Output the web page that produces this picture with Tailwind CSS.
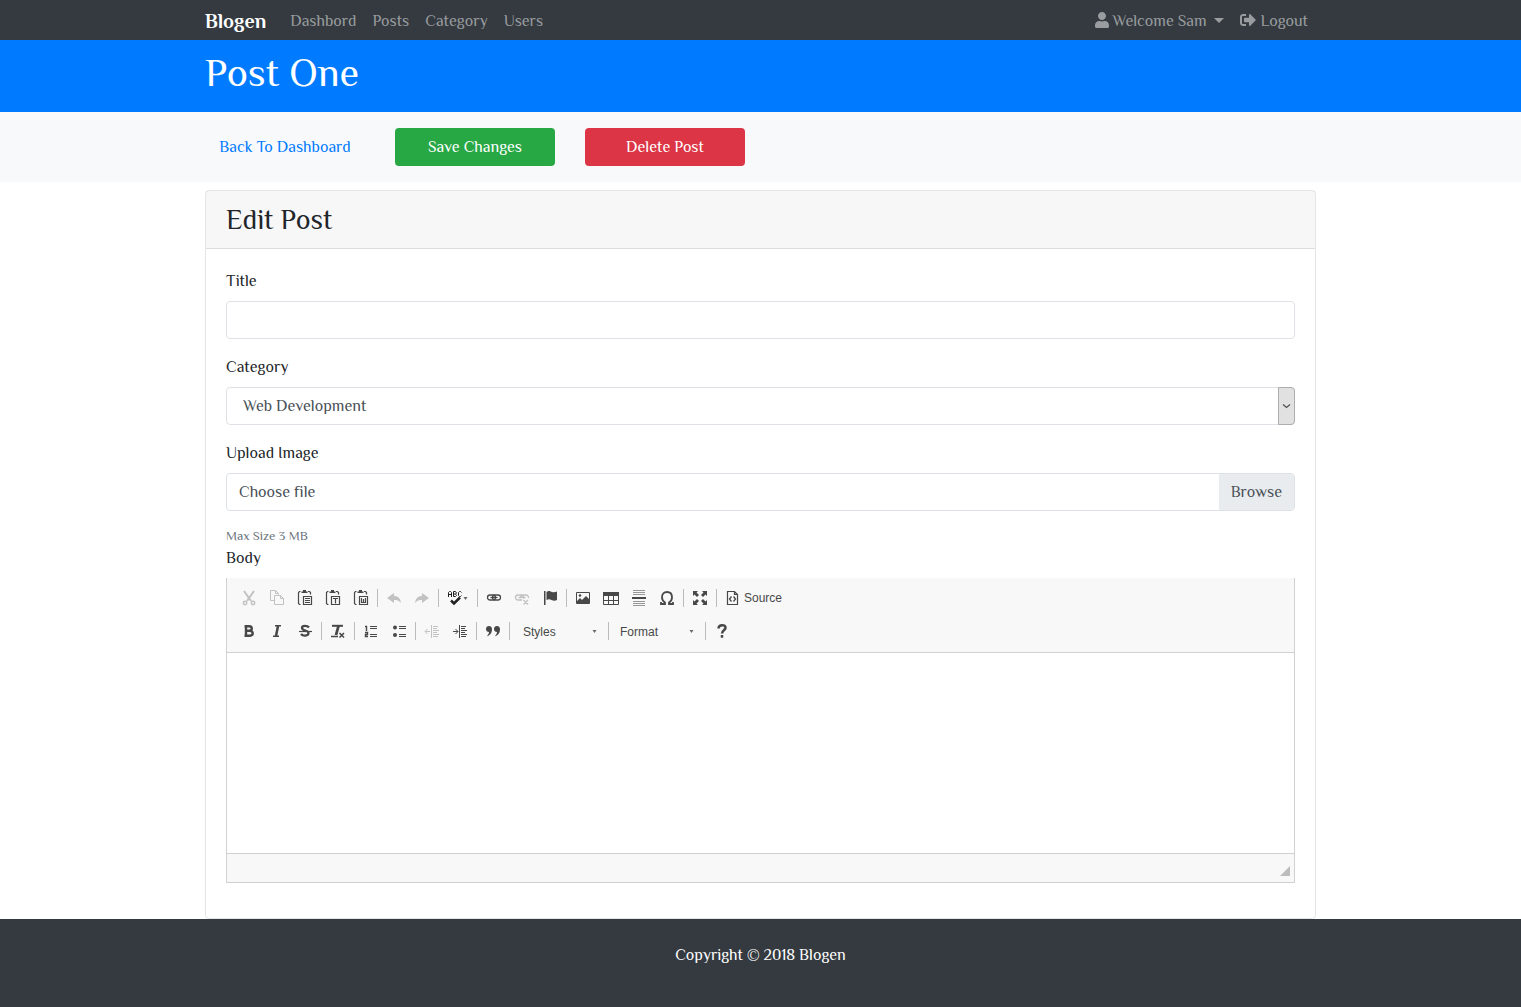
<!DOCTYPE html>
<html lang="en">
<head>
<meta charset="UTF-8">
<meta name="viewport" content="width=device-width, initial-scale=1">
<title>Blogen | Post One</title>
<script src="https://cdn.jsdelivr.net/npm/@tailwindcss/browser@4"></script>
</head>
<body class="flex min-h-screen flex-col bg-white font-['Philosopher','Lato',sans-serif] text-base text-[#212529]">

<nav class="bg-[#343a40]">
  <div class="mx-auto flex h-10 max-w-[1111px] items-center pt-[2px]">
    <a href="#" class="mr-4 text-[20px] leading-6 font-bold text-white">Blogen</a>
    <ul class="flex text-white/50">
      <li><a href="#" class="px-2">Dashbord</a></li>
      <li><a href="#" class="px-2">Posts</a></li>
      <li><a href="#" class="px-2">Category</a></li>
      <li><a href="#" class="px-2">Users</a></li>
    </ul>
    <ul class="ml-auto flex text-white/50">
      <li><a href="#" class="flex items-center gap-1 px-2">
        <svg class="mb-[2px] h-4 w-[14px]" viewBox="0 0 448 512" fill="currentColor" aria-hidden="true"><path d="M224 256c70.700 0 128-57.300 128-128S294.700 0 224 0 96 57.300 96 128s57.300 128 128 128zm89.600 32h-16.700c-22.200 10.200-46.900 16-72.900 16s-50.600-5.800-72.900-16h-16.700C60.200 288 0 348.200 0 422.400V464c0 26.500 21.500 48 48 48h352c26.500 0 48-21.500 48-48v-41.600c0-74.200-60.200-134.400-134.400-134.400z"/></svg>
        Welcome Sam
        <span class="mb-[2px] ml-1 border-x-[5px] border-t-[5px] border-x-transparent border-t-current"></span></a></li>
      <li><a href="#" class="flex items-center gap-1 px-2">
        <svg class="mb-[2px] size-4" viewBox="0 0 512 512" fill="currentColor" aria-hidden="true"><path d="M497 273L329 441c-15 15-41 4.500-41-17v-96H152c-13.300 0-24-10.700-24-24v-96c0-13.300 10.700-24 24-24h136V88c0-21.400 25.900-32 41-17l168 168c9.300 9.400 9.300 24.600 0 34zM192 436v-40c0-6.600-5.400-12-12-12H96c-17.700 0-32-14.300-32-32V160c0-17.700 14.300-32 32-32h84c6.600 0 12-5.400 12-12V76c0-6.600-5.400-12-12-12H96c-53 0-96 43-96 96v192c0 53 43 96 96 96h84c6.600 0 12-5.400 12-12z"/></svg>
        Logout</a></li>
    </ul>
  </div>
</nav>

<header class="bg-[#007bff] pt-[9px] pb-[15px] text-white">
  <h1 class="mx-auto max-w-[1111px] text-[40px] leading-12">Post One</h1>
</header>

<section class="bg-[#f8f9fa] py-4">
  <div class="mx-auto flex max-w-[1111px] gap-[30px]">
    <a href="#" class="w-40 py-[7px] text-center text-[#007bff]">Back To Dashboard</a>
    <button type="button" class="w-40 rounded bg-[#28a745] py-[7px] text-center text-white">Save Changes</button>
    <button type="button" class="w-40 rounded bg-[#dc3545] py-[7px] text-center text-white">Delete Post</button>
  </div>
</section>

<main class="pt-2">
  <div class="mx-auto max-w-[1111px] rounded border border-black/10">
    <div class="border-b border-black/10 bg-black/3 px-5 py-3">
      <h2 class="text-[28px] leading-[33px]">Edit Post</h2>
    </div>
    <form class="px-5 pt-5 pb-[19px]">
      <div class="mb-4">
        <label for="title" class="mb-2 block">Title</label>
        <input id="title" type="text" class="block h-[38px] w-full rounded border border-[#dee2e6] bg-white px-3 text-[#495057]">
      </div>
      <div class="mb-4">
        <label for="category" class="mb-2 block">Category</label>
        <div class="relative">
          <select id="category" class="block h-[38px] w-full appearance-none rounded border border-[#dee2e6] bg-white px-4 text-[#495057]">
            <option>Web Development</option>
          </select>
          <span class="pointer-events-none absolute inset-y-0 right-0 flex w-[17px] items-center justify-center rounded-r border border-[#adadad] bg-[#e1e1e1]">
            <svg class="size-[9px]" viewBox="0 0 9 9" fill="none" stroke="#505050" stroke-width="1.200" aria-hidden="true"><path d="M1 2.500l3.500 3L8 2.500"/></svg>
          </span>
        </div>
      </div>
      <div>
        <label for="image" class="mb-2 block">Upload Image</label>
        <label class="relative mb-4 flex h-[38px] items-center overflow-hidden rounded border border-[#dee2e6] text-[#495057]">
          <input id="image" type="file" class="sr-only">
          <span class="flex-1 px-3">Choose file</span>
          <span class="flex h-full items-center bg-[#e9ecef] px-3">Browse</span>
        </label>
        <small class="mb-[2px] block text-[13px] leading-[17px] text-[#6c757d]">Max Size 3 MB</small>
      </div>
      <div class="mb-4">
        <label for="body" class="mb-2 block">Body</label>
        <div class="border-x border-b border-[#d1d1d1]">
          <div class="flex h-[75px] flex-col gap-[5px] border-b border-[#d1d1d1] bg-[#f8f8f8] px-2 pt-[6px] font-['Liberation_Sans',Arial,sans-serif] text-xs text-[#484848]">
            <div class="flex h-7 items-center">
              <button type="button" aria-label="Cut" class="p-[6px] opacity-30"><svg class="size-4" viewBox="0 0 16 16" fill="none" stroke="currentColor" stroke-width="2"><path d="M3 1l7 10M13 1L6 11"/><circle cx="4" cy="13" r="1.700" stroke-width="1.500"/><circle cx="12" cy="13" r="1.700" stroke-width="1.500"/></svg></button>
              <button type="button" aria-label="Copy" class="p-[6px] opacity-30"><svg class="size-4" viewBox="0 0 16 16" fill="none" stroke="currentColor"><path d="M5.500 10.500h-4V.500h5l3 3v1M6.500.500v3h3M5.500 5.500h6l3 3v6h-9zM11.500 5.500v3h3"/></svg></button>
              <button type="button" aria-label="Paste" class="p-[6px]"><svg class="size-4" viewBox="0 0 16 16" fill="none" stroke="currentColor" stroke-width="1.200"><path d="M3.500 1.500h-1l-1 1v11l1 1h1M11 1.500h1.500l1 1v2M6.500 6.500h8v8h-8zM8 8.500h5M8 10.500h5M8 12.500h5"/><path d="M4.500 3V1.500h1.500V0h3v1.500h1.500V3z" fill="currentColor" stroke="none"/></svg></button>
              <button type="button" aria-label="Paste as plain text" class="p-[6px]"><svg class="size-4" viewBox="0 0 16 16" fill="none" stroke="currentColor" stroke-width="1.200"><path d="M3.500 1.500h-1l-1 1v11l1 1h1M11 1.500h1.500l1 1v2M6.500 6.500h8v8h-8zM8 8.500h5M10.500 8.500v5"/><path d="M4.500 3V1.500h1.500V0h3v1.500h1.500V3z" fill="currentColor" stroke="none"/></svg></button>
              <button type="button" aria-label="Paste from Word" class="p-[6px]"><svg class="size-4" viewBox="0 0 16 16" fill="none" stroke="currentColor" stroke-width="1.200"><path d="M3.500 1.500h-1l-1 1v11l1 1h1M11 1.500h1.500l1 1v2M6.500 6.500h8v8h-8zM8.500 8v4.500h4V8M10.500 9v4"/><path d="M4.500 3V1.500h1.500V0h3v1.500h1.500V3z" fill="currentColor" stroke="none"/></svg></button>
              <span class="mx-[2px] h-[18px] w-px bg-[#bcbcbc]"></span>
              <button type="button" aria-label="Undo" class="p-[6px] opacity-30"><svg class="size-4" viewBox="0 0 16 16" fill="currentColor"><path d="M1 8l7-5v3c4 0 6.500 2.500 7 7-2-2.500-4-3-7-3v3z"/></svg></button>
              <button type="button" aria-label="Redo" class="p-[6px] opacity-30"><svg class="size-4" viewBox="0 0 16 16" fill="currentColor"><path d="M15 8L8 3v3c-4 0-6.500 2.500-7 7 2-2.500 4-3 7-3v3z"/></svg></button>
              <span class="mx-[2px] h-[18px] w-px bg-[#bcbcbc]"></span>
              <button type="button" aria-label="Spell check" class="flex w-[34px] items-center py-[6px] pl-[6px]"><svg class="size-4" viewBox="0 0 16 16" fill="none" stroke="#222"><path d="M1.500 7V2.500l1-1h1l1 1V7M1.500 4.500h3M6.500 1.500v5h2l1-1-1-1.500 1-1-1-1.500zM6.500 4H8.500M14.500 2.500l-1-1h-1l-1 1v3l1 1h1l1-1"/><path d="M4 10.500l3 3 6-6" stroke-width="2.500"/></svg><svg class="h-[3px] w-[5px]" viewBox="0 0 5 3" fill="#686868"><path d="M.5 0h4L2.500 3z"/></svg></button>
              <span class="mx-[2px] h-[18px] w-px bg-[#bcbcbc]"></span>
              <button type="button" aria-label="Link" class="p-[6px]"><svg class="size-4" viewBox="0 0 16 16" fill="none" stroke="currentColor" stroke-width="1.300"><rect x="1.500" y="5" width="8" height="5" rx="2.500"/><rect x="6.500" y="5" width="8" height="5" rx="2.500"/><path d="M4.500 7.500h7"/></svg></button>
              <button type="button" aria-label="Unlink" class="p-[6px] opacity-30"><svg class="size-4" viewBox="0 0 16 16" fill="none" stroke="currentColor" stroke-width="1.300"><path d="M8 10H4a2.500 2.500 0 010-5h3a2.500 2.500 0 012.400 3.500M6.600 7.500A2.500 2.500 0 019 5h3a2.500 2.500 0 012.500 3M4.500 7.500h7M9.500 10l4.500 4.500M14 10l-4.500 4.500"/></svg></button>
              <button type="button" aria-label="Anchor" class="p-[6px]"><svg class="size-4" viewBox="0 0 16 16" fill="currentColor"><path d="M2 1h1.500v14H2zM4.500 2C7 0 8.500 1.500 10 2c2 .700 3 .300 5-.500V10c-2 1-3.500 1-5.500 0s-3-1-5 0z"/></svg></button>
              <span class="mx-[2px] h-[18px] w-px bg-[#bcbcbc]"></span>
              <button type="button" aria-label="Image" class="p-[6px]"><svg class="size-4" viewBox="0 0 16 16" fill="none" stroke="currentColor"><path d="M1.500 2.500h13v11h-13z"/><path d="M2 13v-2l3-3 2 2 4-4 3 3v4z" fill="currentColor" stroke="none"/><circle cx="5" cy="5.500" r="1.300" fill="currentColor" stroke="none"/></svg></button>
              <button type="button" aria-label="Table" class="p-[6px]"><svg class="size-4" viewBox="0 0 16 16" fill="none" stroke="currentColor"><path d="M.500 2.500h15v12H.500zM0 10.500h16M5.500 5v9M10.500 5v9"/><path d="M0 2h16v4H0z" fill="currentColor" stroke="none"/></svg></button>
              <button type="button" aria-label="Horizontal line" class="p-[6px]"><svg class="size-4" viewBox="0 0 16 16" fill="none" stroke="currentColor"><path d="M2 .500h12M2 2.500h12M2 4.500h12M2 11.500h12M2 13.500h12M2 15.500h12" opacity=".55"/><path d="M1 8h14" stroke-width="2"/></svg></button>
              <button type="button" aria-label="Special character" class="p-[6px]"><svg class="size-4" viewBox="0 0 16 16" fill="none" stroke="currentColor" stroke-width="1.800"><path d="M2 12v2h4v-1.500C3.500 11 3 9 3 7.200 3 4 5 2 8 2s5 2 5 5.200c0 1.800-.500 3.800-3 5.300V14h4v-2"/></svg></button>
              <span class="mx-[2px] h-[18px] w-px bg-[#bcbcbc]"></span>
              <button type="button" aria-label="Maximize" class="p-[6px]"><svg class="size-4" viewBox="0 0 16 16" fill="currentColor"><path d="M1 1h5L4.500 2.500 7 5 5 7 2.500 4.500 1 6zM15 1v5l-1.500-1.500L11 7 9 5l2.500-2.500L10 1zM1 15v-5l1.500 1.500L5 9l2 2-2.500 2.500L6 15zM15 15h-5l1.500-1.500L9 11l2-2 2.500 2.500L15 10z"/></svg></button>
              <span class="mx-[2px] h-[18px] w-px bg-[#bcbcbc]"></span>
              <button type="button" class="flex items-center gap-[3px] px-[6px] py-[6px]"><svg class="size-4" viewBox="0 0 16 16" fill="none" stroke="currentColor" stroke-width="1.200"><path d="M2.500 1.500h7l3 3v10h-10zM9.500 1.500v3h3"/><path d="M6.500 6.500l-2 2.500 2 2.500M8.500 6.500l2 2.500-2 2.500" stroke-width="1.300"/></svg>Source</button>
            </div>
            <div class="flex h-7 items-center">
              <button type="button" aria-label="Bold" class="p-[6px]"><svg class="size-4" viewBox="0 0 16 16" fill="none" stroke="currentColor" stroke-width="2.400"><path d="M5 3.200v9.600M3.500 3.200H8c3.700 0 3.700 4.500 0 4.500H5M8 7.700c5 0 5 5.100 0 5.100H3.500"/></svg></button>
              <button type="button" aria-label="Italic" class="p-[6px]"><svg class="size-4" viewBox="0 0 16 16" fill="none" stroke="currentColor"><path d="M9 3L7 13" stroke-width="2.500"/><path d="M6 2.700h6M4 13.300h6" stroke-width="1.500"/></svg></button>
              <button type="button" aria-label="Strikethrough" class="p-[6px]"><svg class="size-4" viewBox="0 0 16 16" fill="none" stroke="currentColor"><path d="M12 4.500C10.500 2.500 5 2 5 5s6.500 2 6.500 5-5.500 3.500-7.500 1" stroke-width="2.300"/><path d="M2 8.500h13" stroke-width="1.200"/></svg></button>
              <span class="mx-[2px] h-[18px] w-px bg-[#bcbcbc]"></span>
              <button type="button" aria-label="Remove format" class="p-[6px]"><svg class="size-4" viewBox="0 0 16 16" fill="none" stroke="currentColor"><path d="M2 2.800h11" stroke-width="2"/><path d="M8.500 3L6 12" stroke-width="2.800"/><path d="M1 13.500h7" stroke-width="1.500"/><path d="M9.500 10l4.500 4.500M14 10l-4.500 4.500" stroke-width="1.600"/></svg></button>
              <span class="mx-[2px] h-[18px] w-px bg-[#bcbcbc]"></span>
              <button type="button" aria-label="Numbered list" class="p-[6px]"><svg class="size-4" viewBox="0 0 16 16" fill="none" stroke="currentColor"><path d="M2 3.500h1.500V8M2 9.500h2.500v2h-2v2H5" stroke-width="1.400"/><path d="M7 3.500h7M7 5.500h7M7 11.500h7M7 13.500h7"/></svg></button>
              <button type="button" aria-label="Bulleted list" class="p-[6px]"><svg class="size-4" viewBox="0 0 16 16" fill="none" stroke="currentColor"><path d="M8 3.500h7M8 5.500h7M8 11.500h7M8 13.500h7"/><circle cx="4" cy="4.500" r="2" fill="currentColor" stroke="none"/><circle cx="4" cy="12" r="2" fill="currentColor" stroke="none"/></svg></button>
              <span class="mx-[2px] h-[18px] w-px bg-[#bcbcbc]"></span>
              <button type="button" aria-label="Decrease indent" class="p-[6px] opacity-30"><svg class="size-4" viewBox="0 0 16 16" fill="none" stroke="currentColor"><path d="M7.500 2v13M9 3.500h5M9 5.500h4M9 7.500h6M9 9.500h4M9 11.500h6M9 13.500h5M1.500 8.500H6M3.500 6l-2.500 2.500L3.500 11"/></svg></button>
              <button type="button" aria-label="Increase indent" class="p-[6px]"><svg class="size-4" viewBox="0 0 16 16" fill="none" stroke="currentColor"><path d="M7.500 2v13M9 3.500h5M9 5.500h4M9 7.500h6M9 9.500h4M9 11.500h6M9 13.500h5M1 8.500h5M3.500 6L6 8.500 3.500 11"/></svg></button>
              <span class="mx-[2px] h-[18px] w-px bg-[#bcbcbc]"></span>
              <button type="button" aria-label="Block quote" class="p-[6px]"><svg class="size-4" viewBox="0 0 16 16" fill="currentColor"><path d="M4 3c2 0 3 1.500 3 3.500C7 10 5 12.500 1.500 13.500 3 12 4 10.500 4 9 2.300 9 1 7.800 1 6s1.200-3 3-3zM12 3c2 0 3 1.500 3 3.500 0 3.500-2 6-5.500 7C11 12 12 10.500 12 9c-1.700 0-3-1.200-3-3s1.200-3 3-3z"/></svg></button>
              <span class="mx-[2px] h-[18px] w-px bg-[#bcbcbc]"></span>
              <div class="relative ml-[2px]">
                <select aria-label="Styles" class="block h-7 w-[92px] appearance-none pt-[2px] pl-[9px]"><option>Styles</option></select>
                <svg class="pointer-events-none absolute top-[13px] right-[9px] h-[3px] w-[5px]" viewBox="0 0 5 3" fill="#686868"><path d="M.5 0h4L2.500 3z"/></svg>
              </div>
              <span class="mx-[2px] h-[18px] w-px bg-[#bcbcbc]"></span>
              <div class="relative">
                <select aria-label="Format" class="block h-7 w-[92px] appearance-none pt-[2px] pl-[9px]"><option>Format</option></select>
                <svg class="pointer-events-none absolute top-[13px] right-[9px] h-[3px] w-[5px]" viewBox="0 0 5 3" fill="#686868"><path d="M.5 0h4L2.500 3z"/></svg>
              </div>
              <span class="mx-[2px] h-[18px] w-px bg-[#bcbcbc]"></span>
              <button type="button" aria-label="Help" class="p-[6px]"><svg class="size-4" viewBox="0 0 16 16" fill="none" stroke="currentColor" stroke-width="2.500"><path d="M4.500 5.500C4.500 1 12 1.200 11.500 5c-.300 2.300-3.500 2.200-3.500 5.500M8 12v2.700"/></svg></button>
            </div>
          </div>
          <textarea id="body" class="block h-[200px] w-full resize-none bg-white p-5 outline-none"></textarea>
          <div class="flex h-[29px] items-end justify-end border-t border-[#d1d1d1] bg-[#f8f8f8] pr-1 pb-[6px]">
            <svg class="size-[10px]" viewBox="0 0 10 10" fill="#bcbcbc" aria-hidden="true"><path d="M10 0v10H0z"/></svg>
          </div>
        </div>
      </div>
    </form>
  </div>
</main>

<footer class="flex-1 bg-[#343a40] pt-6 pb-10 text-center text-white">
  <p>Copyright © 2018 Blogen</p>
</footer>

</body>
</html>
